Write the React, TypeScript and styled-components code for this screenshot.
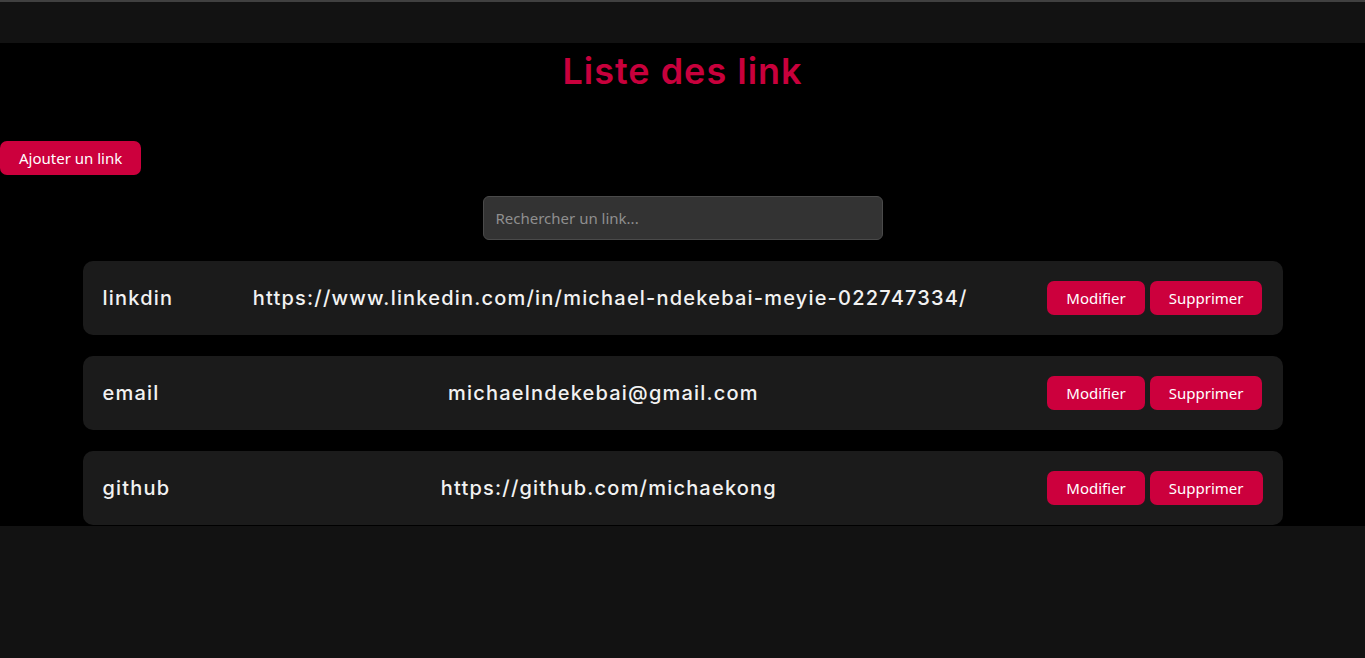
import React from 'react';
import styled, {createGlobalStyle} from 'styled-components';

const GlobalStyle = createGlobalStyle`
    html, body {
        margin: 0;
        background: #121212;
    }
    * { box-sizing: border-box; }
`;

const TopBar = styled.header`
    height: 43px;
    border-top: 2px solid #404040;
    background: #121212;
`;

const Main = styled.main`
    background: #000;
    padding-bottom: 1px;
`;

const Title = styled.h1`
    margin: 0;
    height: 56px;
    line-height: 56px;
    text-align: center;
    color: #c8003c;
    font-family: Inter, "DejaVu Sans", sans-serif;
    font-weight: 600;
    font-size: 36px;
    letter-spacing: 1px;
`;

const Button = styled.button<{$wide?: boolean}>`
    height: 34px;
    padding: 0 ${p => (p.$wide ? 19 : 19)}px;
    border: none;
    border-radius: 7px;
    background: #cc003d;
    color: #fff;
    font-family: "Noto Sans", "Open Sans", sans-serif;
    font-size: 15px;
    cursor: pointer;
`;

const AddRow = styled.div`
    margin-top: 42px;
`;

const SearchWrap = styled.div`
    display: flex;
    justify-content: center;
    margin-top: 21px;
`;

const Search = styled.input`
    width: 400px;
    height: 44px;
    padding: 0 12px;
    background: #333;
    border: 1px solid #4a4a4a;
    border-radius: 6px;
    color: #ddd;
    font-family: "Noto Sans", "Open Sans", sans-serif;
    font-size: 15px;
    outline: none;
    &::placeholder { color: #8f8f8f; }
`;

const List = styled.div`
    width: 1200px;
    margin: 21px auto 0;
    display: flex;
    flex-direction: column;
    gap: 21px;
`;

const Card = styled.div`
    height: 74px;
    padding: 0 20px;
    background: #1b1b1b;
    border-radius: 10px;
    display: flex;
    align-items: center;
    justify-content: space-between;
    color: #f2f2f2;
    font-family: Inter, "DejaVu Sans", sans-serif;
    font-weight: 500;
    font-size: 20px;
    letter-spacing: 1.2px;
`;

const Actions = styled.div`
    display: flex;
    gap: 5px;
`;

const links = [
    {name: 'linkdin', url: 'https://www.linkedin.com/in/michael-ndekebai-meyie-022747334/'},
    {name: 'email', url: 'michaelndekebai@gmail.com'},
    {name: 'github', url: 'https://github.com/michaekong'},
];

export default function App() {
    return (
        <>
            <GlobalStyle/>
            <TopBar/>
            <Main>
                <Title>Liste des link</Title>
                <AddRow>
                    <Button $wide>Ajouter un link</Button>
                </AddRow>
                <SearchWrap>
                    <Search placeholder="Rechercher un link..."/>
                </SearchWrap>
                <List>
                    {links.map(l => (
                        <Card key={l.name}>
                            <span>{l.name}</span>
                            <span>{l.url}</span>
                            <Actions>
                                <Button>Modifier</Button>
                                <Button>Supprimer</Button>
                            </Actions>
                        </Card>
                    ))}
                </List>
            </Main>
        </>
    );
}
